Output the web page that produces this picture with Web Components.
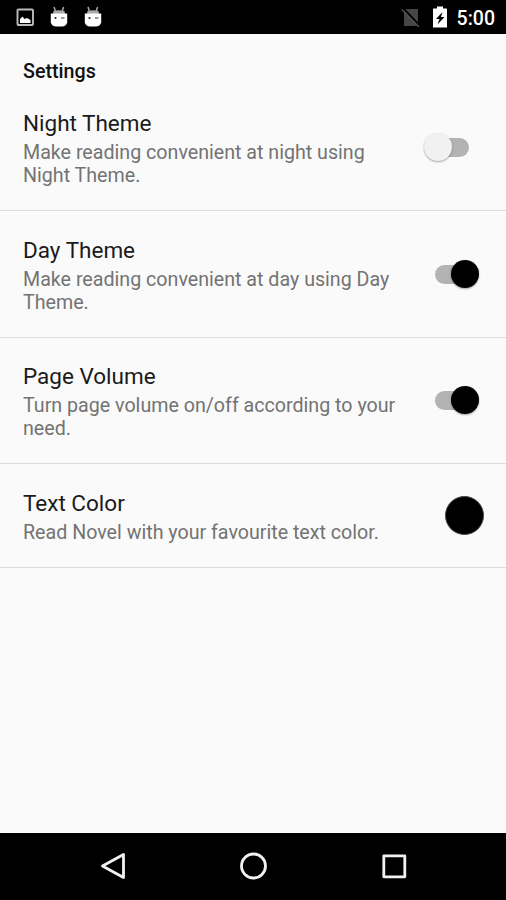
<!DOCTYPE html>
<html lang="en">
<head>
<meta charset="utf-8">
<title>Settings</title>
<style>
html,body{margin:0;height:100%}
body{font-family:Roboto,sans-serif;background:#fafafa;overflow:hidden}
</style>
</head>
<body>
<settings-screen></settings-screen>
<script>
const define = (name, html) => customElements.define(name, class extends HTMLElement {
  constructor() {
    super();
    const t = document.createElement('template');
    t.innerHTML = html;
    this.attachShadow({ mode: 'open' }).append(t.content.cloneNode(true));
  }
});

const droid = `<svg width="18" height="22" viewBox="0 0 18 22"><path d="M4 1L5.400 5M13.600 1L12.200 5" stroke="#aaa" stroke-width="1.500"/><path d="M3.500 5Q9 3.500 14.500 5L15 8H3Z" fill="#aaa"/><path d="M.8 7.500H17.200V16.500Q16 20.500 12 20.500H6Q2 20.500 .8 16.500Z" fill="#fff"/><circle cx="5.500" cy="12" r="1.100" fill="#222"/><path d="M11 12H14.500" stroke="#777" stroke-width="1.500"/></svg>`;

define('status-bar', `<style>
:host{display:flex;align-items:center;height:34px;flex:none;box-sizing:border-box;background:#000;color:#fff;padding:0 11px 0 16px}
svg{display:block;flex:none}
.d{margin-left:16px}
.gap{flex:1}
.bat{margin:0 10px 0 12px}
.time{font-size:19.500px;font-weight:500;line-height:24px;padding-top:3px}
</style>
<svg width="18" height="18" viewBox="0 0 18 18"><rect x="1.500" y="1.500" width="15.500" height="15.500" rx="1" fill="none" stroke="#bbb" stroke-width="1.900"/><path d="M4 15V11L6.500 8.500L8.500 11L11 10L14.500 12V15Z" fill="#fff"/></svg>
<span class="d">${droid}</span><span class="d">${droid}</span>
<span class="gap"></span>
<svg width="20" height="22" viewBox="0 0 20 22"><path d="M3 3H17V20H3Z" fill="#464646"/><path d="M2 2L19 20" stroke="#000" stroke-width="2"/><path d="M.8 3.500L18 21" stroke="#505050" stroke-width="1.500"/></svg>
<svg class="bat" width="14" height="22" viewBox="0 0 14 22"><path d="M0 3Q0 2.500 .5 2.500H4V.5H10V2.500H13.500Q14 2.500 14 3V21Q14 21.500 13.500 21.500H.5Q0 21.500 0 21Z" fill="#fff"/><path d="M9.500 6L3 13H6.500L4.500 18.500L11.500 11H8Z" fill="#000"/></svg>
<span class="time">5:00</span>`);

define('theme-switch', `<style>
:host{display:block;position:relative;width:46px;height:30px;margin:0 6px 1.500px 0}
.track{position:absolute;left:1px;top:6px;width:34px;height:19px;border-radius:10px;background:#b3b3b3}
.thumb{position:absolute;left:17px;top:1px;width:28px;height:28px;border-radius:50%;background:#000;box-shadow:0 1px 2px rgba(0,0,0,.35)}
:host([off]) .thumb{left:-10px;background:#f1f1f1}
</style><div class="track"></div><div class="thumb"></div>`);

define('color-dot', `<style>:host{display:block;width:37px;height:37px;margin:0 2px 1.500px 0;border-radius:50%;background:#000;border:.5px solid #444}</style>`);

define('setting-row', `<style>
:host{display:flex;align-items:center;flex:none;box-sizing:border-box;padding:24.500px 20px 23px 23px;border-bottom:1px solid #dcdcdc}
.text{flex:1;white-space:pre-line}
.title{font-size:22.500px;line-height:28px;color:#1b1b1b}
.sub{font-size:19.650px;line-height:23px;margin-top:4px;color:#737373}
</style>
<div class="text"><div class="title"><slot name="title"></slot></div><div class="sub"><slot></slot></div></div>
<slot name="control"></slot>`);

define('nav-bar', `<style>
:host{display:grid;grid-template-columns:repeat(3,140.500px);justify-content:center;place-items:center;height:67px;box-sizing:border-box;padding-bottom:1px;flex:none;background:#000}
svg{display:block}
</style>
<svg width="30" height="30" viewBox="0 0 30 30" fill="none" stroke="#f2f2f2" stroke-width="2.800" stroke-linejoin="round"><path d="M25.500 3.500V26.500L4.500 15Z"/></svg>
<svg width="30" height="30" viewBox="0 0 30 30" fill="none" stroke="#f2f2f2" stroke-width="2.800"><circle cx="15.500" cy="15" r="12"/></svg>
<svg width="30" height="30" viewBox="0 0 30 30" fill="none" stroke="#f2f2f2" stroke-width="2.800" stroke-linejoin="round"><rect x="4.800" y="4.800" width="21" height="21"/></svg>`);

define('settings-screen', `<style>
:host{display:flex;flex-direction:column;height:100vh;background:#fafafa}
h1{margin:0;height:50.500px;box-sizing:border-box;padding:26px 23px 0;font-size:19.700px;line-height:24px;font-weight:500;color:#111;flex:none}
main{flex:1;display:flex;flex-direction:column}
</style>
<status-bar></status-bar>
<main>
<h1>Settings</h1>
<setting-row><span slot="title">Night Theme</span>Make reading convenient at night using
Night Theme.<theme-switch slot="control" off></theme-switch></setting-row>
<setting-row><span slot="title">Day Theme</span>Make reading convenient at day using Day
Theme.<theme-switch slot="control"></theme-switch></setting-row>
<setting-row><span slot="title">Page Volume</span>Turn page volume on/off according to your
need.<theme-switch slot="control"></theme-switch></setting-row>
<setting-row><span slot="title">Text Color</span>Read Novel with your favourite text color.<color-dot slot="control"></color-dot></setting-row>
</main>
<nav-bar></nav-bar>`);
</script>
</body>
</html>
